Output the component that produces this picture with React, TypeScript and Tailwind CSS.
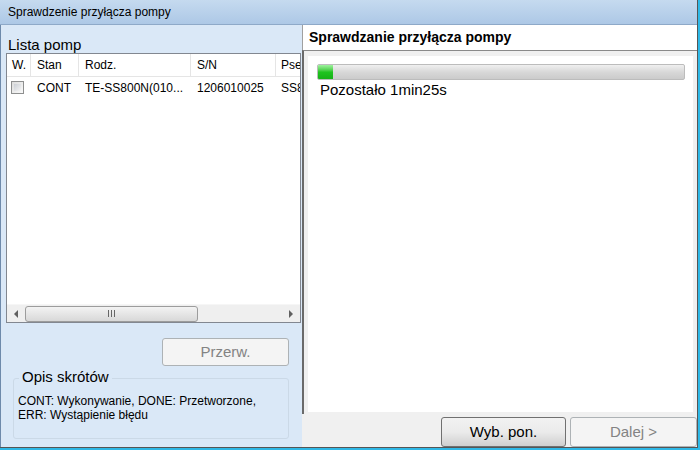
import React from "react";

const F = { fontFamily: '"Liberation Sans", Arial, sans-serif' } as React.CSSProperties;

export default function App() {
  return (
    <div className="w-[700px] h-[450px] overflow-hidden bg-[#2fb8e6]" style={F}>
      <div className="w-[698px] h-[448px] flex flex-col bg-[#dae8f7] border-r border-b border-[#555]">
        {/* title bar */}
        <div className="h-[25px] shrink-0 flex items-center pl-[8px] text-[12px] text-black bg-gradient-to-b from-[#c5daef] to-[#adc8e6] border-b border-[#8ea9c8]">
          Sprawdzenie przyłącza pompy
        </div>
        <div className="flex flex-1 min-h-0">
          {/* left column */}
          <div className="w-[302px] shrink-0 flex flex-col border-l border-[#6e8aab] pl-[5px] pr-[1px]">
            <div className="h-[28px] shrink-0 flex items-end text-[15px] text-black pl-[2px] pb-[1px] leading-none">
              Lista pomp
            </div>
            <div className="h-[270px] shrink-0 border border-[#828790] bg-white flex flex-col">
              <div className="h-[23px] flex items-center text-[12px] text-black border-b border-[#e5e5e5]">
                <div className="w-[24px] pl-[5px] border-r border-[#e5e5e5] h-full flex items-center">W.</div>
                <div className="w-[48px] pl-[6px] border-r border-[#e5e5e5] h-full flex items-center">Stan</div>
                <div className="w-[112px] pl-[6px] border-r border-[#e5e5e5] h-full flex items-center">Rodz.</div>
                <div className="w-[85px] pl-[6px] border-r border-[#e5e5e5] h-full flex items-center">S/N</div>
                <div className="flex-1 pl-[5px] h-full flex items-center overflow-hidden whitespace-nowrap">Pse</div>
              </div>
              <div className="h-[21px] flex items-center text-[12px] text-black">
                <div className="w-[24px] pl-[4px] flex items-center">
                  <div className="w-[13px] h-[13px] border border-[#8e8f8f] bg-gradient-to-br from-[#dcdcdc] to-[#fafafa] p-[2px]">
                    <div className="w-full h-full bg-gradient-to-br from-[#cbcfd5] to-[#f4f4f4]" />
                  </div>
                </div>
                <div className="w-[48px] pl-[6px]">CONT</div>
                <div className="w-[112px] pl-[6px] whitespace-nowrap">TE-SS800N(010...</div>
                <div className="w-[85px] pl-[6px]">1206010025</div>
                <div className="flex-1 pl-[5px] overflow-hidden whitespace-nowrap">SS8</div>
              </div>
              <div className="flex-1" />
              {/* horizontal scrollbar */}
              <div className="h-[18px] flex items-center bg-[#efefef] border-t border-[#f6f6f6]">
                <div className="w-[18px] h-full flex items-center justify-center">
                  <svg width="5" height="8" viewBox="0 0 5 8"><path d="M4 0 L0 4 L4 8 Z" fill="#606060" /></svg>
                </div>
                <div className="w-[173px] h-[16px] rounded-[3px] border border-[#9c9c9c] bg-gradient-to-b from-[#f3f3f3] to-[#d8d8d8] flex items-center justify-center">
                  <svg width="8" height="7" viewBox="0 0 8 7">
                    <rect x="0" y="0" width="1" height="7" fill="#666" />
                    <rect x="3" y="0" width="1" height="7" fill="#666" />
                    <rect x="6" y="0" width="1" height="7" fill="#666" />
                  </svg>
                </div>
                <div className="flex-1" />
                <div className="w-[18px] h-full flex items-center justify-center">
                  <svg width="5" height="8" viewBox="0 0 5 8"><path d="M0 0 L4 4 L0 8 Z" fill="#606060" /></svg>
                </div>
              </div>
            </div>
            <div className="flex justify-end pr-[12px] mt-[15px]">
              <div className="w-[127px] h-[28px] rounded-[3px] border border-[#adb2b5] bg-[#f4f4f4] flex items-center justify-center text-[15px] text-[#838383]">
                Przerw.
              </div>
            </div>
            <div className="relative ml-[7px] mr-[12px] mt-[12px] h-[61px] border border-[#cbd9e7] rounded-[3px] bg-[#dae8f7]">
              <div className="absolute -top-[11px] left-[5px] px-[3px] bg-[#dae8f7] text-[15px] text-black leading-[18px]">
                Opis skrótów
              </div>
              <div className="pt-[15px] pl-[4px] text-[12px] text-black leading-[14px]">
                CONT: Wykonywanie, DONE: Przetworzone,<br />ERR: Wystąpienie błędu
              </div>
            </div>
          </div>
          {/* right column */}
          <div className="flex-1 flex flex-col bg-[#f0f0f0]">
            <div className="h-[25px] shrink-0 bg-white border-l border-[#a0a0a0] flex items-center pl-[6px] text-[14px] font-bold text-black">
              Sprawdzanie przyłącza pompy
            </div>
            <div className="h-[364px] shrink-0 border-l-2 border-t border-[#8a8a8a] border-l-[#6a6a6a] p-[5px] pb-[2px] pl-[4px] pr-[4px]">
              <div className="h-full bg-white pt-[8px] pl-[9px] pr-[8px]">
                <div className="h-[16px] rounded-[2px] border border-[#bcbcbc] bg-gradient-to-b from-[#f0f0f0] via-[#d8d8d8] to-[#cbcbcb] overflow-hidden">
                  <div className="w-[15px] h-full bg-gradient-to-b from-[#9ef29e] via-[#1fc41f] to-[#17b117]" />
                </div>
                <div className="text-[15px] text-black pl-[3px] mt-[1px] leading-[18px]">Pozostało 1min25s</div>
              </div>
            </div>
            <div className="flex-1 flex justify-end items-end gap-[4px]">
              <div className="w-[125px] h-[30px] rounded-[3px] border border-[#707070] bg-gradient-to-b from-[#f2f2f2] via-[#ebebeb] to-[#cfcfcf] flex items-center justify-center text-[15px] text-black">
                Wyb. pon.
              </div>
              <div className="w-[127px] h-[30px] rounded-[3px] border border-[#adb2b5] bg-[#f4f4f4] flex items-center justify-center text-[15px] text-[#838383]">
                Dalej &gt;
              </div>
            </div>
          </div>
        </div>
      </div>
    </div>
  );
}
